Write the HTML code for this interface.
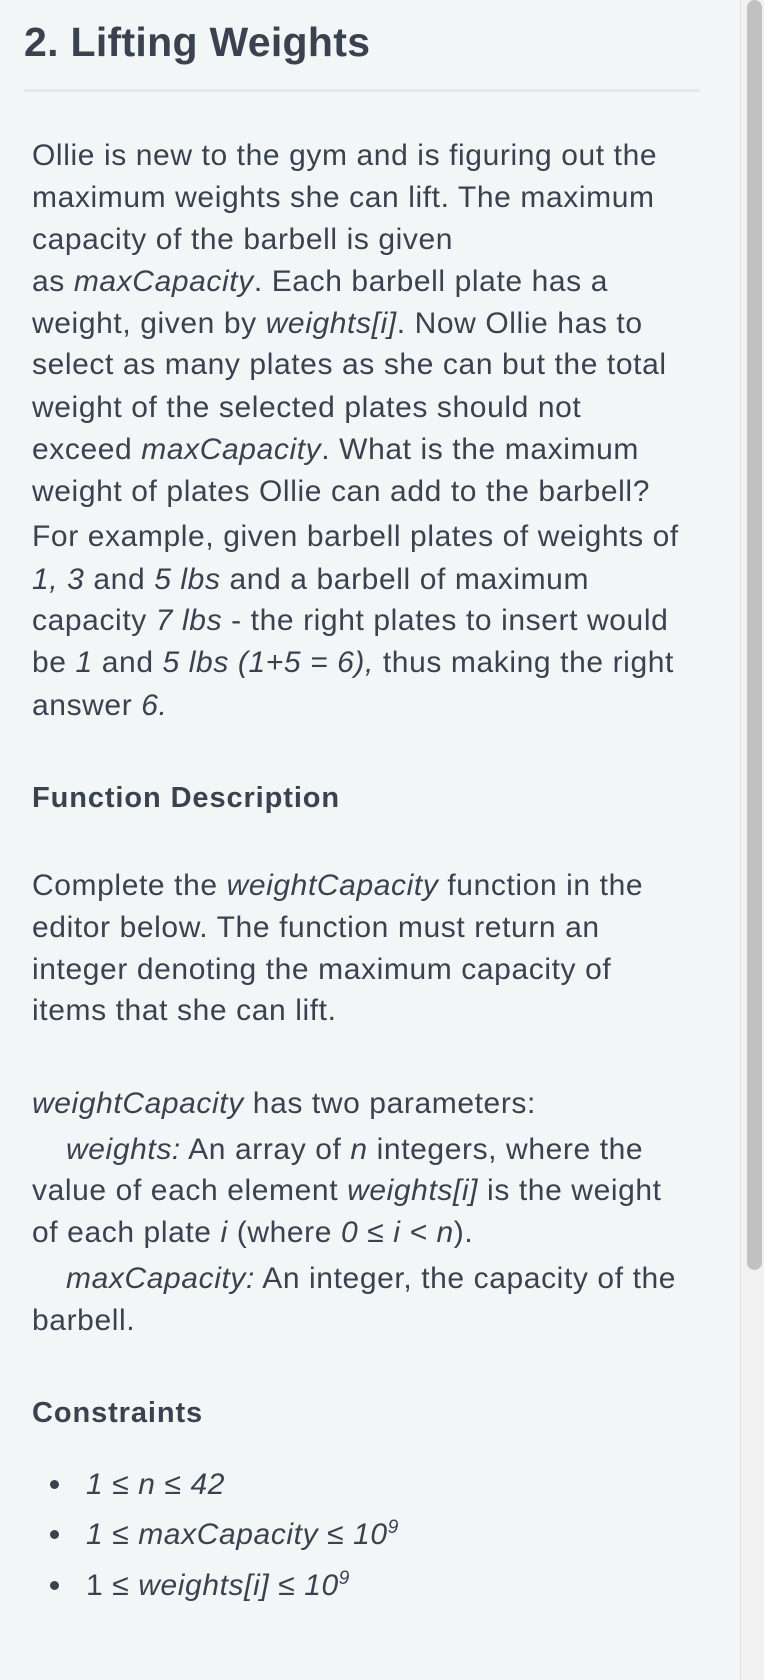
<!DOCTYPE html>
<html><head><meta charset="utf-8"><style>
html,body{margin:0;padding:0}
body{width:764px;height:1680px;background:#f3f6f7;position:relative;overflow:hidden;font-family:"Liberation Sans",sans-serif;color:#39424e}
.l{position:absolute;left:32px;font-size:30px;letter-spacing:0.6px;line-height:42px;white-space:nowrap}
i{font-style:italic}
.b{font-weight:bold;font-size:29px;letter-spacing:0.9px}
h1{position:absolute;left:24px;top:15px;margin:0;font-size:41px;line-height:54px;font-weight:bold;color:#39424e;letter-spacing:0.3px}
.hr{position:absolute;left:24px;top:89px;width:676px;height:3px;background:#e5e8eb}
.sb{position:absolute;left:740px;top:0;width:24px;height:1680px;background:#f1f1f1;border-left:1px solid #e2e2e2}
.th{position:absolute;left:747px;top:0;width:15px;height:1270px;background:#c1c1c1;border-radius:8px}
.dot{position:absolute;left:50px;width:9px;height:9px;border-radius:50%;background:#39424e}
sup{font-size:19px;line-height:0;vertical-align:11px}
</style></head><body>
<h1>2. Lifting Weights</h1>
<div class="hr"></div>
<div class="l" style="top:135px">Ollie is new to the gym and is figuring out the</div>
<div class="l" style="top:177px">maximum weights she can lift. The maximum</div>
<div class="l" style="top:219px">capacity of the barbell is given</div>
<div class="l" style="top:261px">as <i>maxCapacity</i>. Each barbell plate has a</div>
<div class="l" style="top:303px">weight, given by <i>weights[i]</i>. Now Ollie has to</div>
<div class="l" style="top:344px">select as many plates as she can but the total</div>
<div class="l" style="top:387px">weight of the selected plates should not</div>
<div class="l" style="top:429px">exceed <i>maxCapacity</i>. What is the maximum</div>
<div class="l" style="top:471px">weight of plates Ollie can add to the barbell?</div>
<div class="l" style="top:516px">For example, given barbell plates of weights of</div>
<div class="l" style="top:559px"><i>1, 3</i> and <i>5 lbs</i> and a barbell of maximum</div>
<div class="l" style="top:600px">capacity <i>7 lbs</i> - the right plates to insert would</div>
<div class="l" style="top:642px">be <i>1</i> and <i>5 lbs (1+5 = 6),</i> thus making the right</div>
<div class="l" style="top:685px">answer <i>6.</i></div>
<div class="l b" style="top:777px">Function Description</div>
<div class="l" style="top:865px">Complete the <i>weightCapacity</i> function in the</div>
<div class="l" style="top:907px">editor below. The function must return an</div>
<div class="l" style="top:949px">integer denoting the maximum capacity of</div>
<div class="l" style="top:990px">items that she can lift.</div>
<div class="l" style="top:1083px"><i>weightCapacity</i> has two parameters:</div>
<div class="l" style="top:1129px;left:66px"><i>weights:</i> An array of <i>n</i> integers, where the</div>
<div class="l" style="top:1170px">value of each element <i>weights[i]</i> is the weight</div>
<div class="l" style="top:1212px">of each plate <i>i</i> (where <i>0 ≤ i &lt; n</i>).</div>
<div class="l" style="top:1258px;left:66px"><i>maxCapacity:</i> An integer, the capacity of the</div>
<div class="l" style="top:1300px">barbell.</div>
<div class="l b" style="top:1392px">Constraints</div>
<div class="dot" style="top:1480px"></div>
<div class="l" style="top:1464px;left:86px"><i>1 ≤ n ≤ 42</i></div>
<div class="dot" style="top:1530px"></div>
<div class="l" style="top:1514px;left:86px"><i>1 ≤ maxCapacity ≤ 10<sup>9</sup></i></div>
<div class="dot" style="top:1581px"></div>
<div class="l" style="top:1565px;left:86px">1 <i>≤ weights[i] ≤ 10<sup>9</sup></i></div>
<div class="sb"></div>
<div class="th"></div>
</body></html>
